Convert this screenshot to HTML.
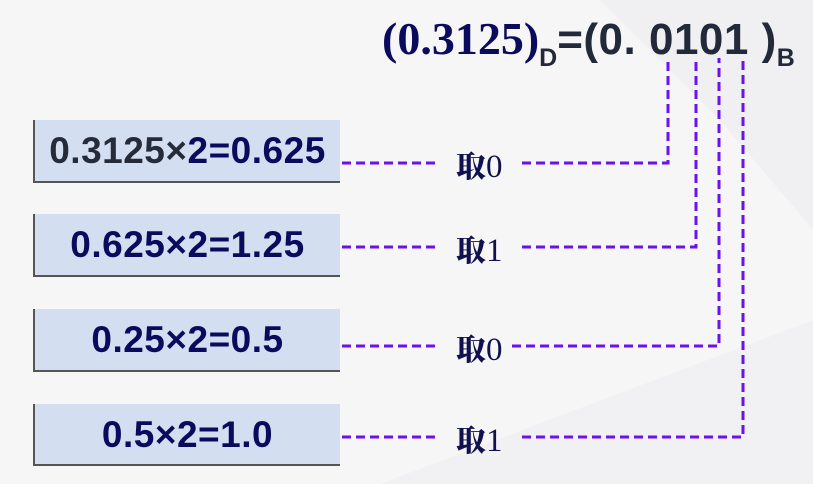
<!DOCTYPE html>
<html><head><meta charset="utf-8"><style>
body{margin:0;width:813px;height:484px;background:#f6f6f7;position:relative;overflow:hidden;font-family:"Liberation Sans",sans-serif}
.box{position:absolute;left:33px;width:307px;background:#d3dff0;border-left:2px solid #555;border-bottom:2px solid #555;box-sizing:border-box;text-align:center;font-weight:bold;font-size:37px;letter-spacing:0.5px;color:#0b0b5e;white-space:nowrap}
.lbl{position:absolute;font-family:"Liberation Serif","Noto Serif CJK SC",serif;font-size:33px;color:#111150}
.lbl b{font-family:"Noto Serif CJK SC",serif;font-weight:900;font-size:30px}
</style></head><body>
<svg width="813" height="484" style="position:absolute;left:0;top:0">
<polygon points="600,0 813,0 813,230 720,120" fill="#f0f0f2"/>
<polygon points="380,484 813,320 813,484" fill="#f1f1f3"/>
<g stroke="#6a12f2" stroke-width="3" fill="none" stroke-dasharray="9,5">
<path d="M342 163H440M522 163H668V58"/>
<path d="M342 247H440M522 247H696V58"/>
<path d="M342 346H440M512 346H719V58"/>
<path d="M342 437H440M522 437H743V58"/>
</g></svg>
<div style="position:absolute;left:382px;top:12px;white-space:nowrap;color:#222a3a;font-weight:bold">
<span style="font-family:'Liberation Serif',serif;font-size:46px;color:#0b0b5e">(0.3125)</span><span style="font-size:25px;position:relative;top:12px">D</span><span style="font-size:44px;letter-spacing:0.5px">=(0. 0101 )</span><span style="font-size:25px;position:relative;top:12px">B</span></div>
<div class="box" style="top:120px;height:63px;line-height:62px"><span style="color:#262b3a">0.3125×</span>2=0.625</div>
<div class="box" style="top:214px;height:63px;line-height:62px">0.625×2=1.25</div>
<div class="box" style="top:309px;height:63px;line-height:62px">0.25×2=0.5</div>
<div class="box" style="top:404px;height:62px;line-height:61px">0.5×2=1.0</div>
<div class="lbl" style="left:456px;top:142px"><b>取</b>0</div>
<div class="lbl" style="left:456px;top:226px"><b>取</b>1</div>
<div class="lbl" style="left:456px;top:325px"><b>取</b>0</div>
<div class="lbl" style="left:456px;top:416px"><b>取</b>1</div>
</body></html>
